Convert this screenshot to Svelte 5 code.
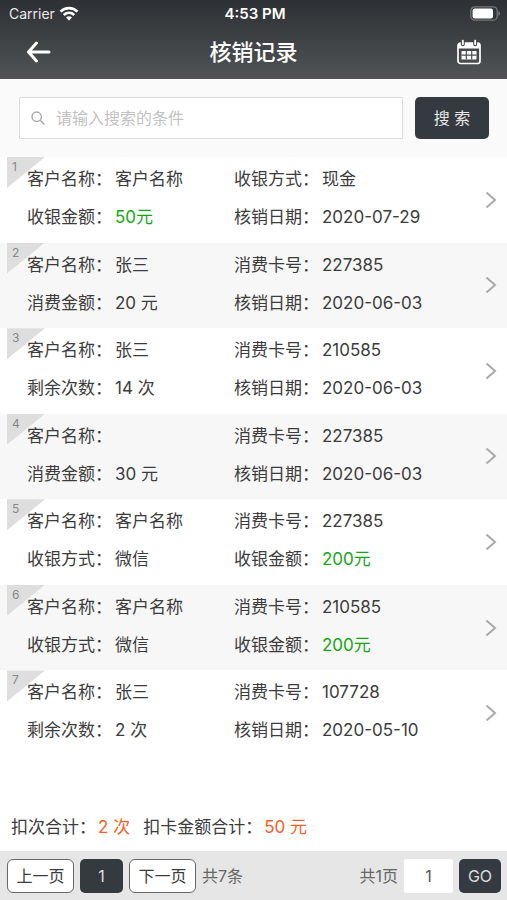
<script>
	const records = [
		[["客户名称", "客户名称"], ["收银方式", "现金"], ["收银金额", "50元", "green"], ["核销日期", "2020-07-29"]],
		[["客户名称", "张三"], ["消费卡号", "227385"], ["消费金额", "20 元"], ["核销日期", "2020-06-03"]],
		[["客户名称", "张三"], ["消费卡号", "210585"], ["剩余次数", "14 次"], ["核销日期", "2020-06-03"]],
		[["客户名称", ""], ["消费卡号", "227385"], ["消费金额", "30 元"], ["核销日期", "2020-06-03"]],
		[["客户名称", "客户名称"], ["消费卡号", "227385"], ["收银方式", "微信"], ["收银金额", "200元", "green"]],
		[["客户名称", "客户名称"], ["消费卡号", "210585"], ["收银方式", "微信"], ["收银金额", "200元", "green"]],
		[["客户名称", "张三"], ["消费卡号", "107728"], ["剩余次数", "2 次"], ["核销日期", "2020-05-10"]]
	];

	let keyword = $state("");
	let page = $state("1");
</script>

<div class="app">
	<header>
		<div class="status">
			<div class="carrier">
				<span>Carrier</span>
				<svg width="20" height="15" viewBox="0 0 20 15" fill="none" stroke="#fff" stroke-width="2.6">
					<path d="M1.5 5.6C6.4 0.9 13.6 0.9 18.5 5.6" />
					<path d="M4.7 9C7.8 6.2 12.2 6.2 15.3 9" />
					<path d="M10 14.4L7 11.4C8.8 9.9 11.2 9.9 13 11.4Z" fill="#fff" stroke="none" />
				</svg>
			</div>
			<div class="time">4:53 PM</div>
			<div class="battery">
				<svg width="31" height="15" viewBox="0 0 31 15">
					<rect x="0.8" y="0.8" width="26.4" height="13.4" rx="4" fill="none" stroke="#74777a" stroke-width="1.3" />
					<rect x="2.6" y="2.6" width="20.4" height="9.8" rx="2.2" fill="#fff" />
					<path d="M28.4 5.2C30.6 6 30.6 9 28.4 9.8Z" fill="#74777a" />
				</svg>
			</div>
		</div>
		<div class="nav">
			<button class="icon" aria-label="返回">
				<svg width="26" height="22" viewBox="0 0 26 22" fill="none" stroke="#fff" stroke-width="3" stroke-linecap="round" stroke-linejoin="round">
					<path d="M24 11H3.5M11.5 2L3.5 11L11.5 20" />
				</svg>
			</button>
			<h1>核销记录</h1>
			<button class="icon right" aria-label="日历">
				<svg width="26" height="26" viewBox="0 0 26 26">
					<rect x="2" y="4" width="22" height="20.5" rx="2.5" fill="none" stroke="#fff" stroke-width="1.7" />
					<path d="M2 9.5V6Q2 4 4 4H22Q24 4 24 6V9.5Z" fill="#fff" />
					<path d="M6.8 1.5V5.3M19.2 1.5V5.3" stroke="#42464a" stroke-width="4" stroke-linecap="round" />
					<path d="M6.8 1.7V5.3M19.2 1.7V5.3" stroke="#fff" stroke-width="1.9" stroke-linecap="round" />
					<path d="M5.5 12H20.5V20.5H5.5Z" fill="#fff" />
					<path d="M5.5 16.2H20.5M10.3 12V20.5M15.7 12V20.5" stroke="#4a4e51" stroke-width="1.2" />
				</svg>
			</button>
		</div>
	</header>

	<form class="search" onsubmit={(e) => e.preventDefault()}>
		<label class="field">
			<svg width="14" height="14" viewBox="0 0 14 14" fill="none" stroke="#a8a8a8" stroke-width="1.4">
				<circle cx="5.7" cy="5.7" r="4.7" />
				<path d="M9.2 9.2L13.4 13.4" />
			</svg>
			<input type="text" aria-label="搜索" placeholder="请输入搜索的条件" bind:value={keyword} />
		</label>
		<button class="dark submit">搜 索</button>
	</form>

	<main>
		{#each records as record, i}
		<div class="record">
			<span class="corner">{i + 1}</span>
			<div class="fields">
				{#each record as [name, value, color]}
				<div class="item"><span class="name">{name}：</span><span class={color}>{value}</span></div>
				{/each}
			</div>
			<svg class="chevron" width="12" height="18" viewBox="0 0 12 18" fill="none" stroke="#a9a9a9" stroke-width="2">
				<path d="M1.5 1.5L10 9L1.5 16.5" />
			</svg>
		</div>
		{/each}
	</main>

	<div class="totals">
		<span>扣次合计：<b>2 次</b></span>
		<span>扣卡金额合计：<b>50 元</b></span>
	</div>

	<footer>
		<button class="page">上一页</button>
		<button class="dark current">1</button>
		<button class="page">下一页</button>
		<span>共7条</span>
		<span class="pages">共1页</span>
		<input type="text" aria-label="页码" bind:value={page} />
		<button class="dark go">GO</button>
	</footer>
</div>

<style>
	:global(body) {
		margin: 0;
		background: #fff;
	}
	.app {
		display: flex;
		flex-direction: column;
		min-height: 100vh;
		font-family: Inter, "Noto Sans CJK SC", sans-serif;
		font-size: 17px;
		line-height: 24px;
		color: #3c3c3c;
	}
	button, input {
		font: inherit;
		box-sizing: border-box;
		border: none;
		padding: 0;
		margin: 0;
	}
	button {
		cursor: pointer;
	}
	svg {
		display: block;
		flex: none;
	}
	header {
		background: linear-gradient(#2d3034, #515456);
		color: #fff;
		height: 79px;
	}
	.status {
		display: grid;
		grid-template-columns: 1fr auto 1fr;
		align-items: center;
		height: 27px;
		padding: 0 6px 0 9px;
		font-size: 15px;
		line-height: 26px;
	}
	.carrier {
		display: flex;
		align-items: center;
		gap: 4px;
		font-size: 14px;
		color: #e8e8e8;
	}
	.time {
		font-weight: 600;
	}
	.battery {
		display: flex;
		justify-content: flex-end;
	}
	.nav {
		display: grid;
		grid-template-columns: 1fr auto 1fr;
		align-items: center;
		height: 50px;
		padding: 0 25px;
	}
	.icon {
		display: flex;
		justify-self: start;
		background: none;
	}
	.icon.right {
		justify-self: end;
	}
	h1 {
		margin: 0;
		font-size: 22px;
		line-height: 32px;
		font-weight: 500;
	}
	.dark {
		background: #353940;
		color: #fff;
		border-radius: 5px;
	}
	.search {
		display: flex;
		gap: 12px;
		padding: 18px 18px 18px 19px;
		background: #fafafa;
		font-size: 16px;
	}
	.field {
		flex: 1;
		min-width: 0;
		display: flex;
		align-items: center;
		gap: 11px;
		box-sizing: border-box;
		height: 42px;
		padding: 0 11px;
		background: #fff;
		border: 1px solid #ddd;
		border-radius: 1px;
	}
	.field input {
		flex: 1;
		min-width: 0;
		background: none;
		outline: none;
		color: #3c3c3c;
	}
	.field input::placeholder {
		color: #c2c2c2;
		opacity: 1;
	}
	.submit {
		width: 74px;
		height: 42px;
		color: #e8e8e8;
	}
	main {
		flex: 1;
		display: grid;
		grid-auto-rows: 1fr;
	}
	.record {
		position: relative;
		display: flex;
		align-items: flex-start;
		padding: 10px 10px 10px 27px;
	}
	.record:nth-child(even) {
		background: #f7f7f7;
	}
	.corner {
		position: absolute;
		left: 7px;
		top: 0;
		box-sizing: border-box;
		width: 38px;
		height: 31px;
		padding-left: 5px;
		background: #dedede;
		clip-path: polygon(0 0, 100% 0, 0 100%);
		font-size: 12px;
		line-height: 20px;
		color: #888;
	}
	.fields {
		position: relative;
		flex: 1;
		display: grid;
		grid-template-columns: 207px 1fr;
		row-gap: 14px;
	}
	.chevron {
		align-self: center;
	}
	.item {
		display: flex;
		white-space: nowrap;
	}
	.name {
		width: 88px;
	}
	.green {
		color: #14a714;
	}
	.totals {
		display: flex;
		gap: 13px;
		padding: 59px 11px 12px;
	}
	.totals b {
		margin-left: 2px;
		font-weight: 400;
		color: #f55f26;
	}
	footer {
		display: flex;
		align-items: center;
		gap: 6px;
		box-sizing: border-box;
		height: 49px;
		padding: 0 6px 0 7px;
		background: #e6e6e6;
		font-size: 16px;
		color: #666;
	}
	footer button, footer input {
		height: 34px;
		border-radius: 6px;
	}
	.page {
		width: 67px;
		border: 1px solid #666;
		background: #fff;
		color: #3c3c3c;
	}
	.current {
		width: 43px;
		color: #ddd;
	}
	.pages {
		margin-left: auto;
	}
	footer input {
		width: 49px;
		border-radius: 2px;
		background: #fff;
		color: #555;
		text-align: center;
	}
	.go {
		width: 42px;
		color: #ddd;
	}
</style>
